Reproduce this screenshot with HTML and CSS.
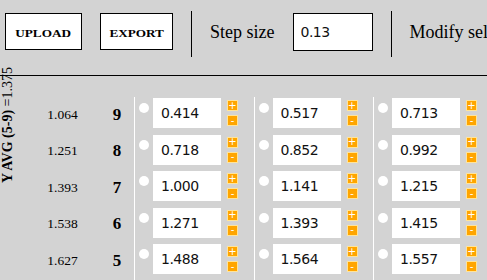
FILE: index.html
```html
<!DOCTYPE html>
<html lang="en">
<head>
    <meta charset="UTF-8">
    <title>Y grid editor</title>
    <link rel="stylesheet" href="styles.css">
</head>
<body>
    <div class="toolbar">
        <button class="btn btn-upload"><span>UPLOAD</span></button>
        <button class="btn btn-export"><span>EXPORT</span></button>
        <div class="sep"></div>
        <label class="step-label" for="step">Step size</label>
        <input class="step-input" id="step" type="text" value="0.13">
        <div class="sep"></div>
        <span class="modify">Modify selected</span>
    </div>

    <div class="main">
        <div class="side">
            <div class="yavg"><b>Y AVG (5-9)</b> =1.375</div>
        </div>

        <div class="labels">
            <div class="label-row"><span class="val">1.064</span><span class="num">9</span></div>
            <div class="label-row"><span class="val">1.251</span><span class="num">8</span></div>
            <div class="label-row"><span class="val">1.393</span><span class="num">7</span></div>
            <div class="label-row"><span class="val">1.538</span><span class="num">6</span></div>
            <div class="label-row"><span class="val">1.627</span><span class="num">5</span></div>
        </div>

        <!-- column 1 -->
        <div class="col">
            <div class="cell"><span class="radio"></span><input class="cell-input" value="0.414"><div class="pm"><button class="pm-btn">+</button><button class="pm-btn">-</button></div></div>
            <div class="cell"><span class="radio"></span><input class="cell-input" value="0.718"><div class="pm"><button class="pm-btn">+</button><button class="pm-btn">-</button></div></div>
            <div class="cell"><span class="radio"></span><input class="cell-input" value="1.000"><div class="pm"><button class="pm-btn">+</button><button class="pm-btn">-</button></div></div>
            <div class="cell"><span class="radio"></span><input class="cell-input" value="1.271"><div class="pm"><button class="pm-btn">+</button><button class="pm-btn">-</button></div></div>
            <div class="cell"><span class="radio"></span><input class="cell-input" value="1.488"><div class="pm"><button class="pm-btn">+</button><button class="pm-btn">-</button></div></div>
        </div>

        <!-- column 2 -->
        <div class="col">
            <div class="cell"><span class="radio"></span><input class="cell-input" value="0.517"><div class="pm"><button class="pm-btn">+</button><button class="pm-btn">-</button></div></div>
            <div class="cell"><span class="radio"></span><input class="cell-input" value="0.852"><div class="pm"><button class="pm-btn">+</button><button class="pm-btn">-</button></div></div>
            <div class="cell"><span class="radio"></span><input class="cell-input" value="1.141"><div class="pm"><button class="pm-btn">+</button><button class="pm-btn">-</button></div></div>
            <div class="cell"><span class="radio"></span><input class="cell-input" value="1.393"><div class="pm"><button class="pm-btn">+</button><button class="pm-btn">-</button></div></div>
            <div class="cell"><span class="radio"></span><input class="cell-input" value="1.564"><div class="pm"><button class="pm-btn">+</button><button class="pm-btn">-</button></div></div>
        </div>

        <!-- column 3 -->
        <div class="col">
            <div class="cell"><span class="radio"></span><input class="cell-input" value="0.713"><div class="pm"><button class="pm-btn">+</button><button class="pm-btn">-</button></div></div>
            <div class="cell"><span class="radio"></span><input class="cell-input" value="0.992"><div class="pm"><button class="pm-btn">+</button><button class="pm-btn">-</button></div></div>
            <div class="cell"><span class="radio"></span><input class="cell-input" value="1.215"><div class="pm"><button class="pm-btn">+</button><button class="pm-btn">-</button></div></div>
            <div class="cell"><span class="radio"></span><input class="cell-input" value="1.415"><div class="pm"><button class="pm-btn">+</button><button class="pm-btn">-</button></div></div>
            <div class="cell"><span class="radio"></span><input class="cell-input" value="1.557"><div class="pm"><button class="pm-btn">+</button><button class="pm-btn">-</button></div></div>
        </div>
    </div>
</body>
</html>
```

FILE: styles.css
```css
* { margin: 0; padding: 0; box-sizing: border-box; }

body {
    font-family: 'Liberation Serif', 'Times New Roman', serif;
    background: #d3d3d3;
    color: #000;
    overflow: hidden;
}

.toolbar {
    display: flex;
    align-items: flex-start;
    gap: 18px;
    height: 76px;
    padding: 13px 0 0 5px;
    border-bottom: 1px solid #000;
    white-space: nowrap;
    overflow: hidden;
}

.toolbar > * { flex-shrink: 0; }

.btn {
    height: 37px;
    background: #fff;
    border: 1px solid #000;
    font-family: 'Liberation Serif', serif;
    font-size: 10px;
    font-weight: bold;
    padding-top: 4px;
    cursor: pointer;
}

.btn span {
    display: inline-block;
    transform: scaleX(1.32);
}

.btn-upload { width: 77px; }
.btn-export { width: 73px; }

.sep {
    width: 1px;
    height: 46px;
    margin-top: -2px;
    background: #000;
}

.step-label, .modify {
    font-size: 18px;
    line-height: 38px;
}

.step-input {
    width: 80px;
    height: 38px;
    border: 1px solid #000;
    background: #fff;
    padding-left: 7px;
    font-family: 'DejaVu Sans', sans-serif;
    font-size: 14px;
    letter-spacing: -0.5px;
    color: #111;
    outline: none;
}

.main {
    display: flex;
    align-items: flex-start;
}

.side {
    width: 15px;
    flex-shrink: 0;
}

.yavg {
    margin-top: -9px;
    writing-mode: vertical-rl;
    transform: rotate(180deg);
    font-size: 14px;
    line-height: 15px;
    white-space: nowrap;
}

.labels {
    width: 119px;
    flex-shrink: 0;
    margin-top: 21px;
    padding-top: 1px;
    display: flex;
    flex-direction: column;
    gap: 6.5px;
}

.label-row {
    height: 30px;
    display: flex;
    align-items: center;
    padding-top: 3px;
}

.val {
    width: 95px;
    text-align: center;
    font-size: 13.5px;
}

.num {
    width: 14px;
    text-align: center;
    font-size: 17px;
    font-weight: bold;
}

.col {
    width: 119.5px;
    flex-shrink: 0;
    margin-top: 21px;
    padding: 1px 0 20px 4px;
    border-left: 1px solid #fff;
    display: flex;
    flex-direction: column;
    gap: 6.5px;
}

.cell {
    display: flex;
    align-items: flex-start;
    height: 30px;
}

.radio {
    width: 10px;
    height: 10px;
    margin: 5px 4px 0 0;
    border-radius: 50%;
    background: #fff;
    flex-shrink: 0;
}

.cell-input {
    width: 68px;
    height: 30px;
    border: none;
    background: #fff;
    padding-left: 8px;
    font-family: 'DejaVu Sans', sans-serif;
    font-size: 14px;
    letter-spacing: -0.5px;
    color: #111;
    outline: none;
    margin-right: 6px;
}

.pm {
    display: flex;
    flex-direction: column;
    gap: 4px;
    margin-top: 2px;
}

.pm-btn {
    width: 11px;
    height: 11px;
    background: #ffa500;
    border: 1px solid #ffe49a;
    color: #fff;
    font-family: 'DejaVu Sans', sans-serif;
    font-size: 10px;
    line-height: 8px;
    display: flex;
    align-items: center;
    justify-content: center;
    cursor: pointer;
}
```
